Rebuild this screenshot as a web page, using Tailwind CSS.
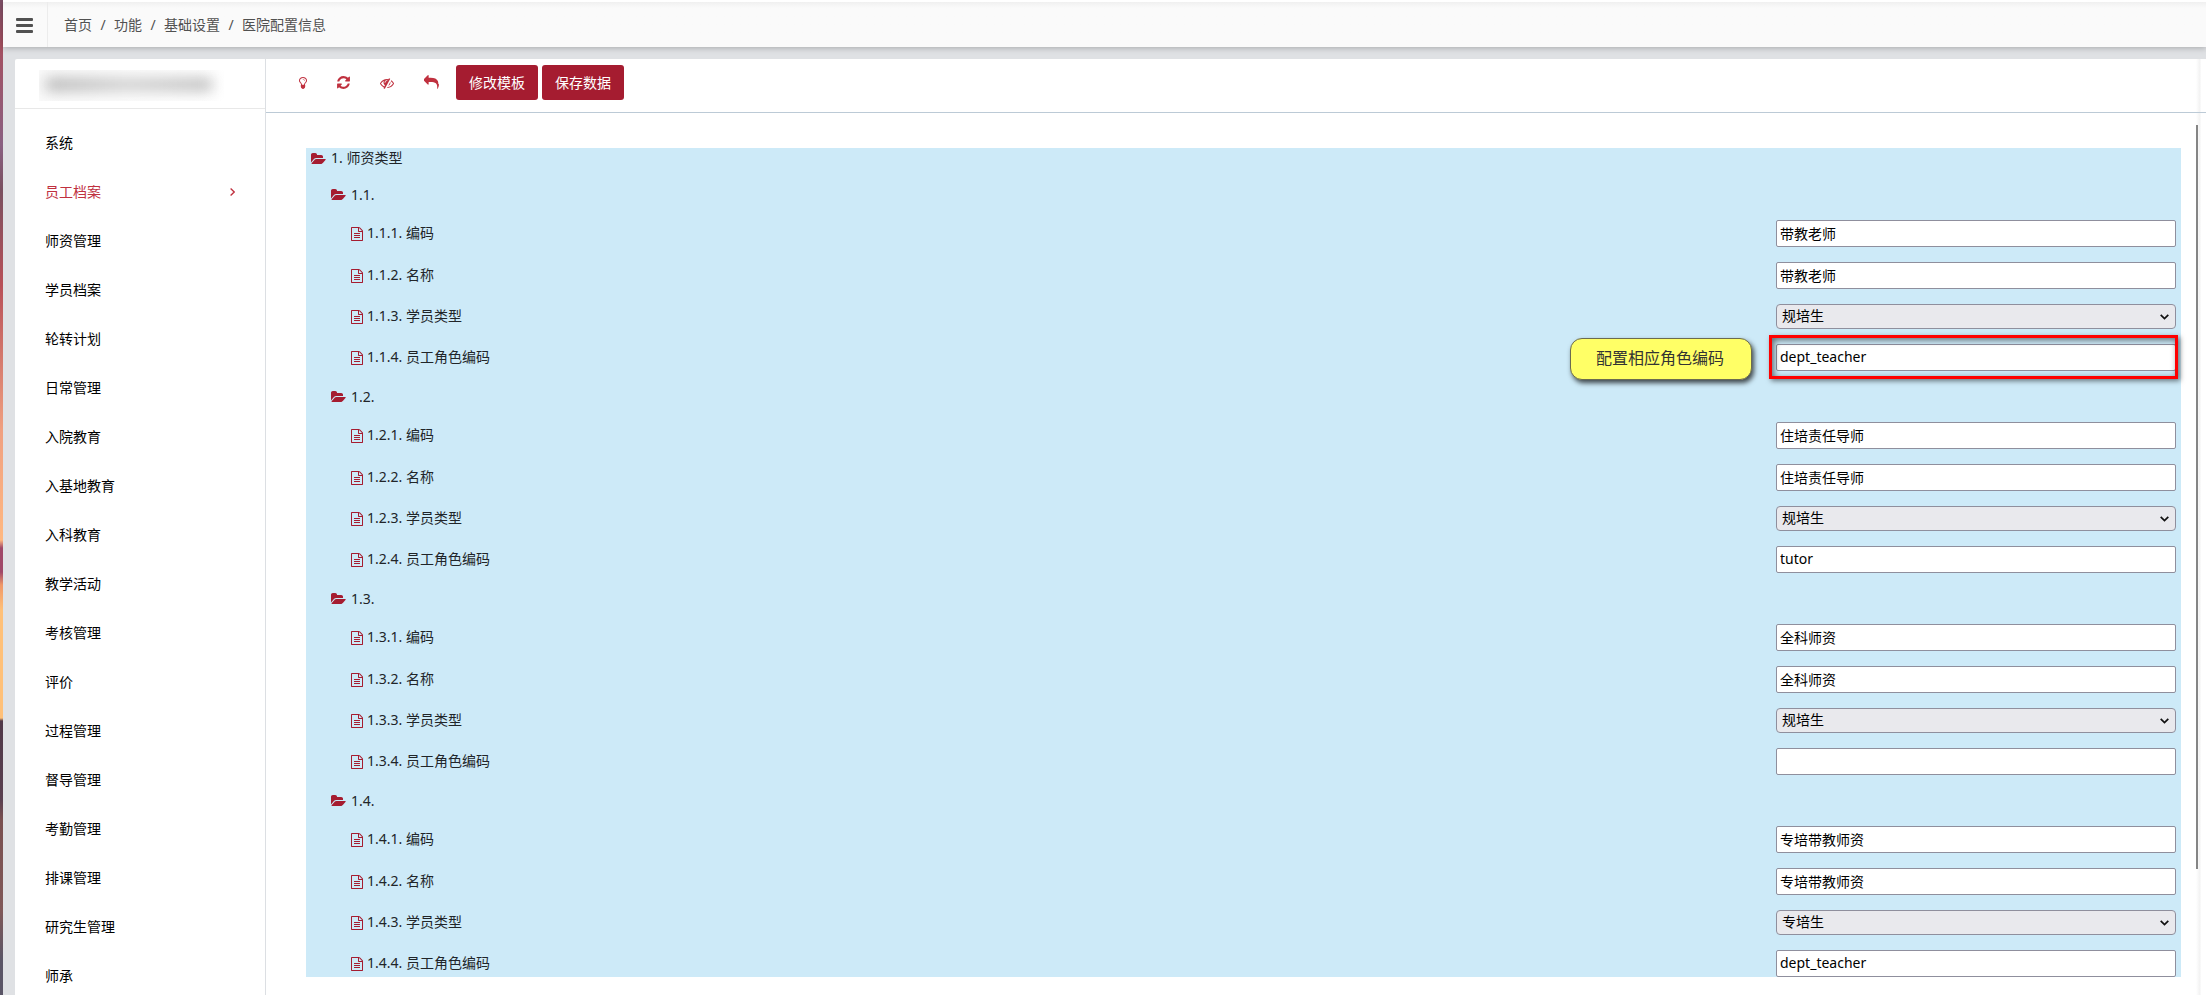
<!DOCTYPE html>
<html lang="zh-CN">

<head>
  <meta charset="UTF-8" />
  <meta name="viewport" content="width=device-width, initial-scale=1.0" />
  <title>医院配置信息</title>
  <script src="https://cdn.jsdelivr.net/npm/@tailwindcss/browser@4"></script>
</head>

<body class="h-[995px] w-[2206px] overflow-hidden flex bg-white font-['Noto_Sans','Noto_Sans_CJK_SC',sans-serif] text-[14px] leading-[20px] text-black">
  <!-- icons -->
  <svg class="hidden">
    <symbol id="folder" viewBox="64 0 1920 1792"><path d="M1943 952q0 31-31 66l-336 396q-43 51-120.5 86.5t-143.5 35.5h-1088q-34 0-60.5-13t-26.5-43q0-31 31-66l336-396q43-51 120.5-86.5t143.5-35.5h1088q34 0 60.5 13t26.5 43zm-343-344v160h-832q-94 0-197 47.5t-164 119.5l-337 396-5 6q0-4-.5-12.5t-.5-12.5v-960q0-92 66-158t158-66h320q92 0 158 66t66 158v32h544q92 0 158 66t66 158z" /></symbol>
    <symbol id="file" viewBox="128 0 1536 1792"><path d="M1596 380q28 28 48 76t20 88v1152q0 40-28 68t-68 28h-1344q-40 0-68-28t-28-68v-1600q0-40 28-68t68-28h896q40 0 88 20t76 48zm-444-244v376h376q-10-29-22-41l-313-313q-12-12-41-22zm384 1528v-1024h-416q-40 0-68-28t-28-68v-416h-768v1536h1280zm-1024-864q0-14 9-23t23-9h704q14 0 23 9t9 23v64q0 14-9 23t-23 9h-704q-14 0-23-9t-9-23v-64zm736 224q14 0 23 9t9 23v64q0 14-9 23t-23 9h-704q-14 0-23-9t-9-23v-64q0-14 9-23t23-9h704zm0 256q14 0 23 9t9 23v64q0 14-9 23t-23 9h-704q-14 0-23-9t-9-23v-64q0-14 9-23t23-9h704z" /></symbol>
  </svg>

  <!-- strip of the desktop wallpaper -->
  <div class="w-[3px] shrink-0 bg-[linear-gradient(#7d5068,#a55060_45px,#8a6082_145px,#7a5060_190px,#b85058_285px,#f0a080_430px,#ffb880_540px,#a04868_548px,#a04868_572px,#f09868_585px,#ffc078_610px,#ffc078_718px,#503848_721px,#5a4050_800px,#7a5050_820px,#805858_910px,#5a5566_960px)]"></div>

  <div class="flex-1 min-w-0 flex flex-col bg-[#dfe1e4]">
    <header class="h-[47px] shrink-0 border-t-2 border-white bg-linear-to-b from-[#f0f0f0] to-[#fafafa] to-[6px] flex relative shadow-[0_1px_6px_rgba(0,0,0,0.25)]">
      <div class="w-[45px] border-r border-[#ececec] pl-[13px] pt-[16px]">
        <div class="w-[17px] flex flex-col gap-[3px]">
          <i class="h-[3px] rounded-[1px] bg-[#515151]"></i>
          <i class="h-[3px] rounded-[1px] bg-[#515151]"></i>
          <i class="h-[3px] rounded-[1px] bg-[#515151]"></i>
        </div>
      </div>
      <nav class="flex items-center gap-[8.4px] pl-4 text-[#515151]">
        <span>首页</span><span>/</span><span>功能</span><span>/</span><span>基础设置</span><span>/</span><span>医院配置信息</span>
      </nav>
    </header>

    <div class="flex-1 min-h-0 pt-3 pl-3 flex">
      <aside class="w-[251px] shrink-0 bg-white border-r border-[#dcdfe3] rounded-tl-[2px]">
        <div class="h-[50px] border-b border-[#e8e8e8] pl-6 pt-[11px]">
          <div class="w-[185px] h-[31px] bg-linear-to-r from-[#fafafa] to-white overflow-hidden">
            <div class="w-[166px] h-[13px] mt-2 ml-[7px] bg-linear-to-r from-[#b4b4b4] via-[#cecece] to-[#bcbcbc] blur-[7px]"></div>
          </div>
        </div>
        <ul id="menu" class="pt-[9px]"></ul>
      </aside>

      <main class="flex-1 min-w-0 bg-[linear-gradient(to_right,#fff_1930px,#f2f2f2_1934px,#fff_1935px)] flex flex-col">
        <div class="h-[54px] shrink-0 border-b border-[#bccad6] flex items-start pl-[30px] pt-[6px] text-[#c0313f]">
          <div class="flex items-center h-[35px]">
            <svg class="w-[14px] h-[14px] fill-current" viewBox="0 0 1792 1792"><path d="M1120 576q0 13-9.5 22.5t-22.5 9.5-22.5-9.5-9.5-22.5q0-46-54-71t-106-25q-13 0-22.5-9.5t-9.5-22.5 9.5-22.5 22.5-9.5q50 0 99.5 16t87 54 37.5 90zm160 0q0-72-34.5-134t-90-101.5-123-62-136.5-22.5-136.5 22.5-123 62-90 101.5-34.5 134q0 101 68 180 10 11 30.5 33t30.5 33q128 153 141 298h228q13-145 141-298 10-11 30.5-33t30.5-33q68-79 68-180zm128 0q0 155-103 268-45 49-74.5 87t-59.5 95.5-34 107.5q47 28 47 82 0 37-25 64 25 27 25 64 0 52-45 81 13 23 13 47 0 46-31.5 71t-77.5 25q-20 44-60 70t-87 26-87-26-60-70q-46 0-77.5-25t-31.5-71q0-24 13-47-45-29-45-81 0-37 25-64-25-27-25-64 0-54 47-82-4-50-34-107.5t-59.5-95.5-74.5-87q-103-113-103-268 0-99 44.5-184.5t117-142 164-89 186.5-32.5 186.5 32.5 164 89 117 142 44.5 184.5z" /></svg>
            <svg class="ml-[26px] w-[15px] h-[15px] fill-current" viewBox="0 0 1792 1792"><path d="M1639 1056q0 5-1 7-64 268-268 434.5t-478 166.5q-146 0-282.5-55t-243.5-157l-129 129q-19 19-45 19t-45-19-19-45v-448q0-26 19-45t45-19h448q26 0 45 19t19 45-19 45l-137 137q71 66 161 102t187 36q134 0 250-65t186-179q11-17 53-117 8-23 30-23h192q13 0 22.5 9.5t9.5 22.5zm25-800v448q0 26-19 45t-45 19h-448q-26 0-45-19t-19-45 19-45l138-138q-148-137-349-137-134 0-250 65t-186 179q-11 17-53 117-8 23-30 23h-199q-13 0-22.5-9.5t-9.5-22.5v-7q65-268 270-434.5t480-166.5q146 0 284 55.5t245 156.5l130-129q19-19 45-19t45 19 19 45z" /></svg>
            <svg class="ml-[29px] w-[14px] h-[14px] fill-current" viewBox="0 0 1792 1792"><path d="M555 1335l78-141q-87-63-136-159t-49-203q0-121 61-225-229 117-381 353 167 258 427 375zm389-759q0-20-14-34t-34-14q-125 0-214.5 89.5t-89.5 214.5q0 20 14 34t34 14 34-14 14-34q0-86 61-147t147-61q20 0 34-14t14-34zm363-191q0 7-1 9-106 189-316 567t-315 566l-49 89q-10 16-28 16-12 0-134-70-16-10-16-28 0-12 44-87-143-65-263.5-173t-208.5-245q-20-31-20-69t20-69q153-235 380-371t496-136q89 0 180 17l54-97q10-16 28-16 5 0 18 6t31 15.5 33 18.5 31.5 18.5 19.5 11.5q16 10 16 27zm37 447q0 139-79 253.5t-209 164.5l280-502q8 45 8 84zm448 128q0 35-20 69-39 64-109 145-150 172-347.5 267t-419.5 95l74-132q212-18 392.5-137t301.5-307q-115-179-282-294l63-112q95 64 182.5 153t144.5 184q20 34 20 69z" /></svg>
            <svg class="ml-[30px] w-[15px] h-[15px] fill-current" viewBox="0 0 1792 1792"><path d="M1792 1120q0 166-127 451-3 7-10.5 24t-13.5 30-13 22q-12 17-28 17-15 0-23.5-10t-8.5-25q0-9 2.5-26.5t2.5-23.5q5-68 5-123 0-112-19.5-200.5t-54-153.5-89-112-120-78.5-148-48-171.5-24.5-196-7h-224v256q0 26-19 45t-45 19-45-19l-512-512q-19-19-19-45t19-45l512-512q19-19 45-19t45 19 19 45v256h224q713 0 875 403 53 134 53 333z" /></svg>
          </div>
          <button class="ml-[17px] w-[82px] h-[35px] rounded-[3px] bg-[#a51c30] text-white">修改模板</button>
          <button class="ml-1 w-[82px] h-[35px] rounded-[3px] bg-[#a51c30] text-white">保存数据</button>
        </div>

        <div class="flex-1 min-h-0 flex">
          <div class="w-[1875px] ml-10 mt-[35px] h-[829px] bg-[#cdeaf8] text-[#212529]">
            <div class="h-[29px] pl-[5px] flex items-start gap-[5px]">
              <svg class="w-[15px] h-[14px] mt-[4px] fill-[#a51c30]"><use href="#folder" /></svg>
              <span>1. 师资类型</span>
            </div>
            <div id="tree"></div>
          </div>
          <div class="ml-[15px] mt-3 w-[2px] h-[744px] bg-[#858585]"></div>
        </div>
      </main>
    </div>
  </div>

  <!-- annotations over the form -->
  <div class="absolute left-[1570px] top-[338px] w-[182px] h-[42px] rounded-[12px] border border-[#6b6b50] bg-[#ffff66] shadow-[2px_3px_5px_rgba(0,0,0,0.7)] flex items-center justify-center pb-[2px] pr-[2px] text-[16px] text-[#333]">配置相应角色编码</div>
  <div class="absolute left-[1769px] top-[335px] w-[409px] h-[44px] border-[3px] border-[#ff0000] shadow-[2px_2px_5px_rgba(0,0,0,0.5),inset_2px_2px_6px_rgba(0,0,0,0.55)]"></div>

  <script>
    const menu = ["系统", "员工档案", "师资管理", "学员档案", "轮转计划", "日常管理", "入院教育", "入基地教育", "入科教育", "教学活动", "考核管理", "评价", "过程管理", "督导管理", "考勤管理", "排课管理", "研究生管理", "师承"];
    document.getElementById("menu").innerHTML = menu.map((name) => name === "员工档案"
      ? `<li class="h-[49px] pl-[30px] pr-[30px] flex items-center justify-between text-[#c0313f]">${name}
          <svg class="w-[5px] h-[8px]" viewBox="0 0 5 8" fill="none" stroke="currentColor" stroke-width="1.3"><path d="M.6 .5L4.2 4 .6 7.5" /></svg></li>`
      : `<li class="h-[49px] pl-[30px] flex items-center">${name}</li>`).join("");

    const groups = [
      ["带教老师", "带教老师", "规培生", "dept_teacher"],
      ["住培责任导师", "住培责任导师", "规培生", "tutor"],
      ["全科师资", "全科师资", "规培生", ""],
      ["专培带教师资", "专培带教师资", "专培生", "dept_teacher"],
    ];
    const labels = ["编码", "名称", "学员类型", "员工角色编码"];

    const field = (value, i) => i === 2
      ? `<div class="w-[400px] h-[25px] border border-[#8f8f9d] rounded-[4px] bg-[#e9e9ed] pl-[5px] pr-[6px] flex items-center justify-between text-black"><span class="pb-px">${value}</span>
          <svg class="w-[9px] h-[6px]" viewBox="0 0 9 6" fill="none" stroke="#111" stroke-width="1.7"><path d="M.7 .8L4.5 4.6 8.3 .8" /></svg></div>`
      : `<input type="text" value="${value}" class="w-[400px] h-[27px] border border-[#8f8f9d] rounded-[2px] bg-white px-[3px] pb-[2px] text-black" />`;

    document.getElementById("tree").innerHTML = groups.map((values, g) => `
      <div class="h-[36px] pl-[25px] flex items-center gap-[5px]">
        <svg class="w-[15px] h-[14px] fill-[#a51c30]"><use href="#folder" /></svg>
        <span class="pb-px">1.${g + 1}.</span>
      </div>
      ${values.map((value, i) => `
      <div class="pt-[7px] ${g === 3 && i === 3 ? "pb-0" : "pb-2"} pl-[45px] pr-[5px] flex items-center justify-between">
        <div class="flex items-center gap-[4px]">
          <svg class="w-[12px] h-[14px] fill-[#a51c30]"><use href="#file" /></svg>
          <span class="pb-[2px]">1.${g + 1}.${i + 1}. ${labels[i]}</span>
        </div>
        ${field(value, i)}
      </div>`).join("")}`).join("");
  </script>
</body>

</html>
